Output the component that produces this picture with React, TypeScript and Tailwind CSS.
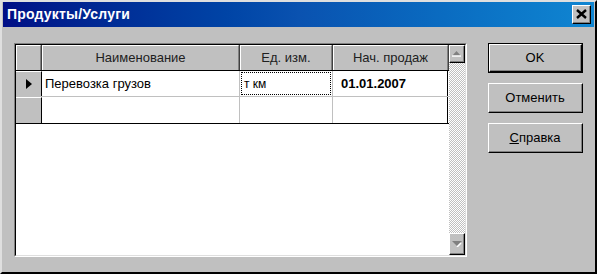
import React from "react";

const font = { fontFamily: '"Liberation Sans", Arial, sans-serif' };

function Raised({ className = "", children }: { className?: string; children?: React.ReactNode }) {
  return (
    <div className={`border-t border-l border-white border-b border-r border-b-black border-r-black ${className}`}>
      <div className="w-full h-full border-b border-r border-[#808080] flex items-center justify-center">
        {children}
      </div>
    </div>
  );
}

function Button({ children, def }: { children: React.ReactNode; def?: boolean }) {
  const inner = (
    <Raised className="w-full h-full bg-[#c0c0c0]">
      <span className="text-[13px] text-black">{children}</span>
    </Raised>
  );
  return (
    <div className={`w-[95px] h-[30px] ${def ? "border border-black" : ""}`}>{inner}</div>
  );
}

function HeaderCell({ w, label }: { w: string; label?: string }) {
  return (
    <div className={`${w} h-full bg-[#c0c0c0] border-r border-[#404040]`}>
      <div className="w-full h-full border-t border-l border-white border-r border-r-[#808080] flex items-center justify-center">
        <span className="text-[13px] text-[#202020]">{label}</span>
      </div>
    </div>
  );
}

export default function App() {
  return (
    <div
      className="w-[597px] h-[274px] bg-[#c0c0c0] border-t-2 border-l-2 border-[#dfdfdf] border-b-2 border-r-2 border-b-black border-r-black flex flex-col"
      style={font}
    >
      {/* title bar */}
      <div className="h-[25px] mx-px flex items-center justify-between bg-gradient-to-r from-[#000e86] via-[#0a52b0] to-[#1086d2] pl-[4px] pr-[3px]">
        <span className="text-white font-bold text-[14px] tracking-[0.2px]">Продукты/Услуги</span>
        <div className="w-[19px] h-[19px]">
          <Raised className="w-full h-full bg-[#c0c0c0]">
            <svg width="11" height="10" viewBox="0 0 11 10">
              <path d="M1 1 L10 9 M10 1 L1 9" stroke="black" strokeWidth="2.4" />
            </svg>
          </Raised>
        </div>
      </div>

      <div className="flex pl-[12px] pt-[16px]">
        {/* grid */}
        <div className="w-[453px] h-[214px] border-t border-l border-[#808080] border-b border-r border-b-white border-r-white">
          <div className="w-full h-full border-t border-l border-black border-b border-r border-b-[#dfdfdf] border-r-[#dfdfdf] bg-white flex">
            <div className="w-[433px] flex flex-col">
              <div className="h-[26px] flex border-b border-black">
                <HeaderCell w="w-[26px]" />
                <HeaderCell w="w-[198px]" label="Наименование" />
                <HeaderCell w="w-[93px]" label="Ед. изм." />
                <HeaderCell w="w-[116px]" label="Нач. продаж" />
              </div>
              <div className="flex flex-col border-b border-black w-[433px]">
                <div className="h-[26px] flex border-b border-[#c0c0c0]">
                  <div className="w-[26px] bg-[#c0c0c0] border-r border-black border-t border-t-white flex items-center justify-center">
                    <svg width="6" height="10" viewBox="0 0 6 10">
                      <path d="M0 0 L6 5 L0 10 Z" fill="black" />
                    </svg>
                  </div>
                  <div className="w-[198px] border-r border-[#c0c0c0] flex items-center pl-[3px] text-[13px] text-black">
                    Перевозка грузов
                  </div>
                  <div className="w-[93px] border-r border-[#c0c0c0] p-px">
                    <div className="w-full h-full border border-dotted border-black flex items-center pl-[2px] text-[12px] text-black">
                      т км
                    </div>
                  </div>
                  <div className="w-[115px] border-r border-black flex items-center pl-[8px] text-[13px] font-bold text-black">
                    01.01.2007
                  </div>
                </div>
                <div className="h-[26px] flex">
                  <div className="w-[26px] bg-[#c0c0c0] border-r border-black border-t border-t-white" />
                  <div className="w-[198px] border-r border-[#c0c0c0]" />
                  <div className="w-[93px] border-r border-[#c0c0c0]" />
                  <div className="w-[115px] border-r border-black" />
                </div>
              </div>
            </div>
            {/* scrollbar */}
            <div className="w-[16px] flex flex-col bg-[repeating-conic-gradient(#c0c0c0_0_25%,#ffffff_0_50%)] bg-[length:2px_2px]">
              <Raised className="w-[16px] h-[18px] bg-[#c0c0c0]">
                <svg width="9" height="6" viewBox="0 0 9 6">
                  <path d="M4.5 0 L9 5 L0 5 Z" fill="#808080" />
                  <path d="M0 5 H9" stroke="white" strokeWidth="1.5" />
                </svg>
              </Raised>
              <div className="flex-1" />
              <Raised className="w-[16px] h-[22px] bg-[#c0c0c0]">
                <svg width="10" height="6" viewBox="0 0 10 6">
                  <path d="M0 0 L10 0 L5 5 Z" fill="#808080" />
                  <path d="M5 6 L9 2" stroke="white" strokeWidth="1.5" />
                </svg>
              </Raised>
            </div>
          </div>
        </div>

        {/* buttons */}
        <div className="flex flex-col gap-[10px] ml-[21px]">
          <Button def>OK</Button>
          <Button>Отменить</Button>
          <Button>
            <span className="underline">С</span>правка
          </Button>
        </div>
      </div>
    </div>
  );
}
